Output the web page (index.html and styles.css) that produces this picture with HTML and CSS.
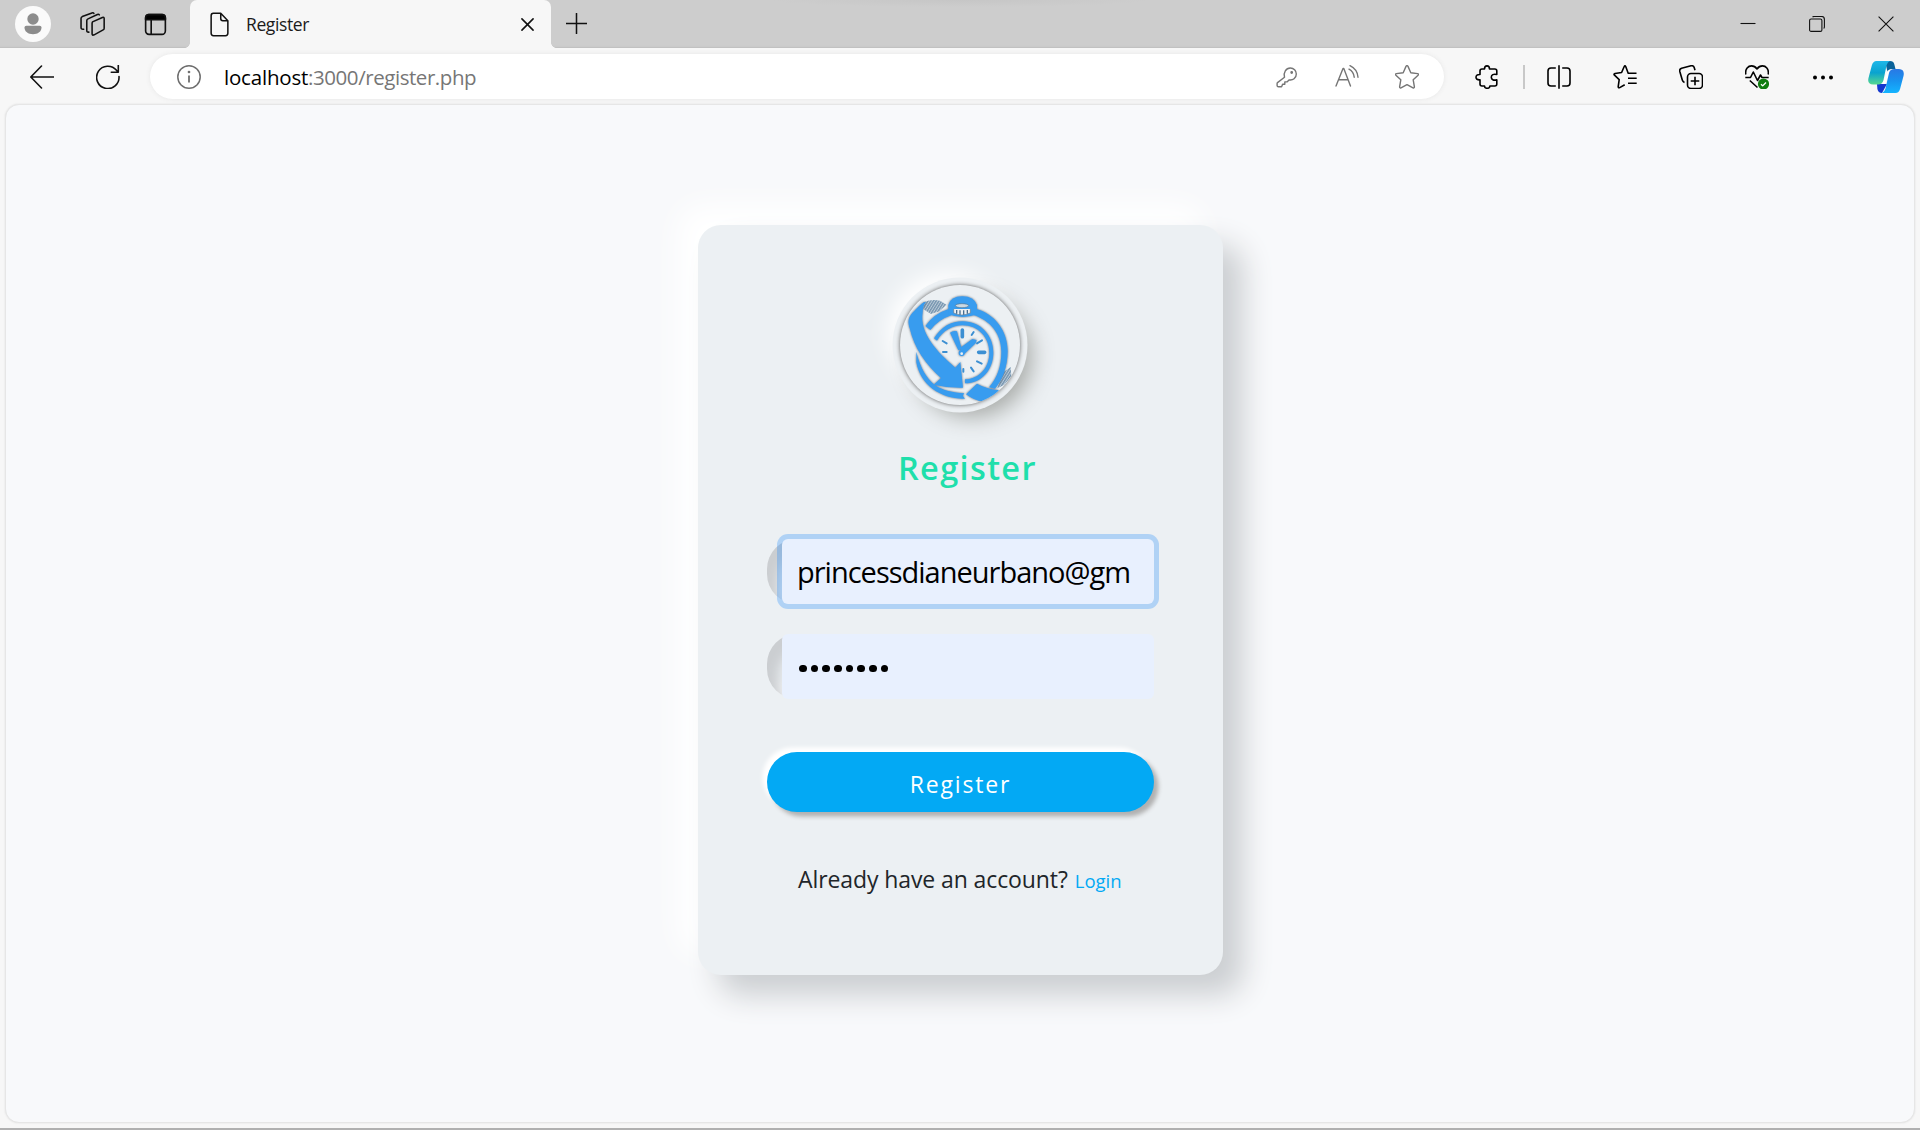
FILE: index.html
```html
<!DOCTYPE html>
<html lang="en">
<head>
<meta charset="utf-8">
<title>Register</title>
<link rel="stylesheet" href="styles.css">
</head>
<body>
<header class="titlebar">
  <svg class="avatar" viewBox="0 0 36 36"><circle cx="18" cy="18" r="18" fill="#fafafa"/><circle cx="18" cy="13" r="5.7" fill="#8c8c8c"/><path d="M9.500 21.500q0-1.800 1.800-1.800h13.400q1.800 0 1.800 1.800c0 4-3.600 6.700-8.500 6.700s-8.500-2.700-8.500-6.700z" fill="#8c8c8c"/></svg>
  <svg class="line workspaces" viewBox="0 0 24 24"><path d="M12 9.500l9.500-4.300q1.700-.6 1.700 1v9.300q0 1.200-1 1.700l-8.600 4.700q-2 .9-2-1V11q0-1 .4-1.500zM8.500 19.300q-2 .3-2-1.500V8.500q0-1.300 1.200-1.900l9-4.200q1.300-.5 1.800.4M3.500 16.500Q1 16.900 1 14.800V6.300Q1 5 2.200 4.400L11.500.9q1.300-.4 1.800.5"/></svg>
  <svg class="line tabsmenu" viewBox="0 0 24 24"><rect x="1.700" y="1.700" width="20.600" height="20.600" rx="3.500"/><path d="M1.700 7V5q0-3.300 3.300-3.300h14q3.300 0 3.300 3.300v2z" fill="#000"/><path d="M7.500 7v15"/></svg>
  <div class="tab">
    <svg class="line file" viewBox="0 0 20 26"><path d="M3.500 1.200h7.800L18.800 9v13.300q0 2.500-2.500 2.500H3.700q-2.500 0-2.500-2.500V3.700q0-2.500 2.300-2.500zM11.300 1.500v5.300q0 2.200 2.200 2.200h5"/></svg>
    <span class="tab-title">Register</span>
    <svg class="line tab-close" viewBox="0 0 14 14"><path d="M1 1l12 12M13 1L1 13"/></svg>
  </div>
  <svg class="line newtab" viewBox="0 0 22 22"><path d="M11 .5v21M.5 11h21"/></svg>
  <div class="window-buttons">
    <svg viewBox="0 0 16 16"><path d="M.5 7.500h15"/></svg>
    <svg viewBox="0 0 16 16"><rect x=".6" y="3" width="12.300" height="12.400" rx="1.500"/><path d="M3.500 1q.6-.5 1.500-.5h7.500q2.900 0 2.900 2.900v7.300q0 1-.7 1.800"/></svg>
    <svg viewBox="0 0 16 16"><path d="M.6.600l14.800 14.800M15.400.6L.6 15.400"/></svg>
  </div>
</header>
<nav class="toolbar">
  <svg class="line back" viewBox="0 0 24 24"><path d="M23.500 12H1M11.500 1L.8 12l10.700 11"/></svg>
  <svg class="line reload" viewBox="0 0 24 24"><path d="M23 11.500A11.200 11.200 0 1 1 20.500 5.300L22 7M22.300.3v7h-7"/></svg>
  <div class="address">
    <svg class="info" viewBox="0 0 24 24"><circle cx="12" cy="12" r="11.200"/><path d="M12 10.500v7" stroke-width="1.800"/><circle cx="12" cy="7" r=".6"/></svg>
    <span class="url"><b>localhost</b>:3000/register.php</span>
    <svg class="tool" viewBox="0 0 24 24"><path d="M9.500 12.300C8.200 7.500 11 3 15.300 3c3.500 0 6 2.600 6 5.900 0 4.200-3.500 6.800-7.300 6l-2 2H9.800v2.300H7.600l-1 2.500H3.500q-1.400 0-1.400-1.300v-1.800q0-.6.400-1z"/><circle cx="16.700" cy="7.500" r=".7"/></svg>
    <svg class="tool" viewBox="0 0 24 24"><path d="M1 21L8 3.500h.8L15.500 21M3.500 14.800H13M14 4.200q4.600 2.500 5.200 8M15 .7q7.300 3.500 8 11.500"/></svg>
    <svg class="tool" viewBox="0 0 24 24"><path d="M11 1.400q1-1.500 2 0l2.800 6.300 6.800.9q1.500.4.500 1.600l-4.900 4.600 1.200 7q0 1.500-1.400 1L12 19.600l-6 3.200q-1.400.5-1.400-1l1.200-7L.9 10.200q-1-1.200.5-1.600l6.800-.9z"/></svg>
  </div>
  <div class="actions">
    <svg class="heavy" viewBox="0 0 24 24"><path d="M7 4h2.500C9.500 2 10.600.9 12 .9S14.500 2 14.500 4h5.300q2 0 2 2v3.500c-3.300-.8-5.500.3-5.500 2.700s2.200 3.500 5.500 2.700V19q0 2-2 2h-4.900c0 1.400-1.400 2.300-2.700 2.300S9.500 22.400 9.500 21H7q-2 0-2-2v-4.200C2.300 15 1 14 1 12.200s1.300-2.800 4-2.700V6q0-2 2-2z"/></svg>
    <i class="divider"></i>
    <svg class="heavy" viewBox="0 0 24 24"><path d="M12 .3v23.400M8.800 3H4Q1 3 1 6v12q0 3 3 3h4.800M15.200 3H20q3 0 3 3v12q0 3-3 3h-4.800"/></svg>
    <svg class="heavy" viewBox="0 0 24 24"><path d="M23.500 8.300h-8.300L12.800 1.800q-.8-1.800-1.700 0L8.600 7.500 2 8.500q-1.700.4-.5 1.700l4.700 4.500-1 7q.1 1.600 1.500.9l5-2.900M15 13.300h8.700M15 18.300h8.700"/></svg>
    <svg class="heavy" viewBox="0 0 24 24"><rect x="8.500" y="8.500" width="15" height="15" rx="3.500"/><path d="M16 11.700v8.600M11.700 16h8.600M5.500 17.500Q3.800 16.800 3.300 15L.8 6.500Q.2 4 2.600 3.200L12 .8q2.500-.5 3.200 1.700l.8 2.800"/></svg>
    <svg class="heavy" viewBox="0 0 24 24"><path d="M.8 9.500C-.2 3.500 3.500.9 6.500.9c2.700 0 4.300 1.400 5.500 3 1.200-1.600 2.800-3 5.500-3 3 0 6.700 2.600 5.700 8.600M.3 12.500h5.200L8.300 7l4.200 8.500 3-5.500 1.500 2.500h6.700M4.800 15.500l7.700 7"/><circle cx="18.500" cy="19" r="5.600" fill="#107c10" stroke="none"/><path d="M16 19.200l1.700 1.700 3.300-3.400" stroke="#fff" stroke-width="1.300"/></svg>
    <svg viewBox="0 0 24 24"><g fill="#000" stroke="none"><circle cx="4" cy="12.500" r="2"/><circle cx="12" cy="12.500" r="2"/><circle cx="20" cy="12.500" r="2"/></g></svg>
    <svg class="copilot" viewBox="0 0 36 32">
      <defs>
        <linearGradient id="cpA" x1="0" y1="0" x2="0" y2="1"><stop offset="0" stop-color="#1fb7e9"/><stop offset=".5" stop-color="#0aa3cf"/><stop offset="1" stop-color="#56d88f"/></linearGradient>
        <linearGradient id="cpB" x1="0" y1="0" x2="0" y2="1"><stop offset="0" stop-color="#2a78e4"/><stop offset=".5" stop-color="#1893ef"/><stop offset="1" stop-color="#14b4ff"/></linearGradient>
      </defs>
      <path d="M17 0h5q3.500 0 4.300 3.300L27.500 8h-4q-3 0-4 3z" fill="#0b6299"/>
      <path d="M9 23h10l-5 9q-3.800 0-4.600-4z" fill="#1438cf"/>
      <path d="M19.800 9.500h3L17 23h-3z" fill="#fff"/>
      <path d="M8.500 0H22q-2.500.8-3.500 4.500L15.500 19q-1.200 4.500-5.500 4.500H5Q-1 23 .5 17L3.800 4.500Q5 0 8.500 0z" fill="url(#cpA)"/>
      <path d="M27.500 32H14q2.500-.8 3.500-4.500L21 12Q22 8 26.500 8h4.500q6 .5 4.500 7l-3.300 12.500q-1.200 4.500-4.700 4.500z" fill="url(#cpB)"/>
    </svg>
  </div>
</nav>
<main class="page">
  <section class="card">
    <svg class="logo" viewBox="90 74 360 360">
      <defs>
        <pattern id="hatch" width="7" height="7" patternUnits="userSpaceOnUse" patternTransform="rotate(32)"><rect width="7" height="7" fill="#bccbd8"/><rect width="4" height="7" fill="#7393ae"/></pattern>
        <filter id="edge" x="-10%" y="-10%" width="120%" height="120%"><feDropShadow dx="0" dy="0" stdDeviation="2.500" flood-color="#4d5660" flood-opacity=".9"/></filter>
      </defs>
      <path d="M160 126q25-10 50-5l20 12-22 20-25 8-23-14z" fill="url(#hatch)"/>
      <path d="M422 320l2 28-22 26-20 10 8-24 12-26z" fill="url(#hatch)"/>
      <g filter="url(#edge)" fill="#379cef">
        <path d="M166 197Q192 160 236 146l8 19Q205 178 181 209z"/>
        <path d="M312 144C378 160 413 215 413 272c0 48-16 88-38 113l-18-4c24-28 37-61 37-107 0-52-32-94-84-110z"/>
        <path d="M235 158V134q7-26 42-26t44 26v28q-42 16-86 0z"/>
        <path d="M192 234C214 199 244 183 278 183c54 0 92 42 92 94 0 50-34 92-85 92v-12c44-2 73-36 73-80 0-46-34-82-80-82-31 0-59 16-77 46z"/>
        <path d="M139 274c13 54 33 80 54 99 28 19 55 22 90 26l-5 7 7 9c-70 2-134-39-146-109z"/>
        <path d="M288 402l33-32q29 16 66 20-19 22-49 34-23-2-50-22z"/>
        <path d="M157 129C112 168 112 178 119 204c14 60 48 108 94 149l-22 20q42 10 88 9l-8-77-15 17c-56-48-108-103-98-166q1-23 10-31-6 0-11 4z"/>
        <path d="M240 217q10-8 21-4l14 53-10 4zM269 264l38-28 13 3-3 10-34 32z"/>
        <circle cx="275" cy="278" r="9"/>
      </g>
      <circle cx="275" cy="280" r="4" fill="#ecf0f3"/>
      <g stroke="#3c8fd2" stroke-linecap="round" fill="none">
        <path d="M277 209v20M326 276h18" stroke-width="11"/>
        <path d="M305 224l6-9M321 249l15-9M321 303l14 7M303 322l8 11M280 326v8M218 242l12 7M219 275h11" stroke-width="6"/>
      </g>
      <path d="M251 146v12q24 12 50 0v-12" fill="#ecf0f3" stroke="#657c90" stroke-width="2"/>
      <path d="M260 149v11M270 150v13M281 150v13M292 149v11" stroke="#486e90" stroke-width="4"/>
      <ellipse cx="276" cy="136" rx="20" ry="6" fill="#ccd9e3" stroke="#597892" stroke-width="2"/>
    </svg>
    <h1 class="heading">Register</h1>
    <form class="form">
      <div class="field"><div class="input focused"><span class="email">princessdianeurbano@gm</span></div></div>
      <div class="field"><div class="input dots"><i></i><i></i><i></i><i></i><i></i><i></i><i></i><i></i></div></div>
      <button type="button" class="submit">Register</button>
    </form>
    <p class="signin"><span class="question">Already have an account?</span> <a class="login">Login</a></p>
  </section>
</main>
</body>
</html>
```
FILE: styles.css
```css
* { box-sizing: border-box; }

body {
  margin: 0;
  height: 1130px;
  overflow: hidden;
  display: flex;
  flex-direction: column;
  background: #f7f7f7;
  border-bottom: 2px solid #b0b0b0;
  font-family: "Open Sans", "Noto Sans", sans-serif;
  color: #212529;
}

svg { display: block; flex: none; fill: none; }

.line { stroke: #111; stroke-width: 1.6; stroke-linecap: round; stroke-linejoin: round; }

/* Browser title bar */
.titlebar {
  height: 48px;
  flex: none;
  display: flex;
  align-items: center;
  padding-left: 15px;
  background:
    radial-gradient(ellipse 190px 7px at 960px 0, #c6c6c6, transparent),
    linear-gradient(#cdcdcd 45px, #c9c9c9 47px, #b9b9b9);
}
.avatar { width: 36px; height: 36px; }
.workspaces { width: 25px; height: 25px; margin: 0 0 0 29px; stroke-width: 1.5; }
.tabsmenu { width: 23px; height: 23px; margin: 0 0 0 39px; stroke-width: 1.7; }
.tab {
  position: relative;
  width: 361px;
  height: 48px;
  margin-left: 23px;
  padding: 0 17px 0 20px;
  display: flex;
  align-items: center;
  background: #f7f7f7;
  border-radius: 7px 7px 0 0;
}
.tab::before, .tab::after {
  content: "";
  position: absolute;
  bottom: 0;
  width: 5px;
  height: 5px;
}
.tab::before { left: -5px; background: radial-gradient(circle at 0 0, transparent 4.500px, #f7f7f7 5px); }
.tab::after { right: -5px; background: radial-gradient(circle at 100% 0, transparent 4.500px, #f7f7f7 5px); }
.file { width: 19px; height: 25px; }
.tab-title { margin: 0 auto 1px 17px; font-size: 17.500px; line-height: 24px; color: #1b1b1b; white-space: nowrap; letter-spacing: -0.4px; }
.tab-close { width: 13px; height: 13px; stroke-width: 1.7; }
.newtab { width: 21px; height: 21px; margin: 0 0 1px 15px; }
.window-buttons { display: flex; gap: 53px; margin: 0 26px 0 auto; }
.window-buttons svg { width: 16px; height: 16px; stroke: #111; stroke-width: 1.1; }

/* Navigation bar */
.toolbar { height: 56px; flex: none; display: flex; align-items: center; padding: 1px 0 0 30px; }
.back { width: 24px; height: 24px; }
.reload { width: 24px; height: 24px; margin-left: 42px; }
.address {
  width: 1294px;
  height: 45px;
  margin-left: 30px;
  padding: 0 7px 0 27px;
  display: flex;
  align-items: center;
  border-radius: 23px;
  background: #fff;
  box-shadow: 0 0 5px #e6e6e6;
}
.info { width: 24px; height: 24px; stroke: #6e6e6e; stroke-width: 1.5; }
.url { margin: 0 auto 0 23px; font-size: 20.500px; line-height: 30px; letter-spacing: -0.44px; color: #767676; white-space: nowrap; }
.url b { font-weight: 400; letter-spacing: -0.2px; color: #000; }
.tool { width: 24px; height: 24px; margin: 0 18px; stroke: #757575; stroke-width: 1.4; stroke-linejoin: round; stroke-linecap: round; }
.actions { display: flex; align-items: center; margin-left: 10px; }
.actions svg { width: 24px; height: 24px; margin: 0 21px; }
.actions .heavy { stroke: #000; stroke-width: 1.6; stroke-linejoin: round; }
.actions .copilot { width: 36px; height: 32px; margin: 0 0 0 12px; }
.divider { width: 2px; height: 24px; margin: 0 2px 0 3px; background: #c8c8c8; }
.actions .divider + svg { margin-left: 20px; }

/* Web page */
.page {
  height: 1019px;
  flex: none;
  margin: 0 5px;
  border: 1px solid #e6e6e6;
  border-radius: 14px;
  background: #f8f9fb;
  box-shadow: 0 0 2px #ddd;
  padding-top: 120px;
}
.card {
  width: 525px;
  height: 750px;
  margin-left: 692px;
  padding: 60px 69px 0;
  border-radius: 23px;
  background: #ecf0f3;
  box-shadow: 20px 20px 30px #cbced1, -20px -20px 30px #fff;
}
.logo {
  width: 120px;
  height: 120px;
  margin: 0 0 0 133px;
  border-radius: 50%;
  background: #ecf0f3;
  box-shadow: 0 0 4.500px #5f5f5f, 0 0 0 7.500px #ecf0f3, 12px 12px 22px #a7aaa7, -12px -12px 22px #fff;
}
.heading {
  margin: 38px 0 0 131px;
  font-size: 32.500px;
  line-height: 50px;
  font-weight: 600;
  letter-spacing: 1.350px;
  color: #1fdfab;
  white-space: nowrap;
}
.form { margin-top: 46px; }
.field {
  height: 65px;
  margin-bottom: 30px;
  padding-left: 15px;
  border-radius: 30px;
  box-shadow: inset 12px 12px 12px #cbced1, inset -12px -12px 12px #fff;
}
.input {
  height: 65px;
  padding-left: 15px;
  display: flex;
  align-items: center;
  border-radius: 6px;
  background: #e8f0fe;
  overflow: hidden;
}
.input.focused { overflow: visible; box-shadow: 0 0 0 5px rgba(13, 131, 253, .27); }
.email { font-size: 29px; line-height: 40px; letter-spacing: -1px; color: #000; white-space: nowrap; }
.dots { gap: 4.100px; padding: 4px 0 0 17px; }
.dots i { width: 7.600px; height: 7.600px; border-radius: 50%; background: #000; }
.submit {
  display: block;
  width: 387px;
  height: 60px;
  margin-top: 53px;
  padding: 3px 0 0;
  border: 0;
  border-radius: 30px;
  background: #03a9f4;
  box-shadow: 4.500px 4.500px 4.500px #b1b1b1, -4.500px -4.500px 4.500px #fff;
  font: 400 23px/30px "Open Sans", "Noto Sans", sans-serif;
  letter-spacing: 1.800px;
  color: #fff;
}
.signin { display: flex; align-items: baseline; margin: 49px 0 0 31px; line-height: 36px; white-space: nowrap; }
.question { font-size: 23px; letter-spacing: -0.1px; }
.login { margin-left: 7px; font-size: 18.500px; color: #03a9f4; }
```
